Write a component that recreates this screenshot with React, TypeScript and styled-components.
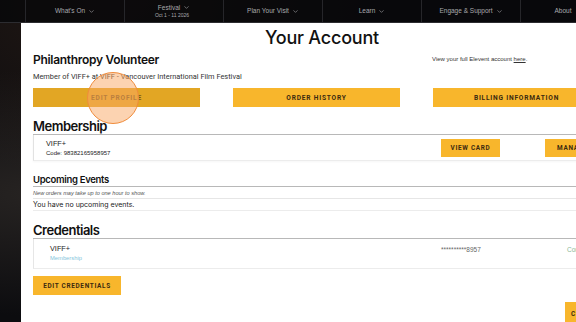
import React from "react";
import styled, { createGlobalStyle } from "styled-components";
import { ChevronDown } from "lucide-react";

const GlobalStyle = createGlobalStyle`
  html, body {
    margin: 0;
    padding: 0;
    width: 576px;
    height: 322px;
    overflow: hidden;
    background: #0c0c0f;
    font-family: "Liberation Sans", Arial, sans-serif;
  }
`;

const navItems = [
  { label: "What's On", chevron: true },
  { label: "Festival", chevron: true, sub: "Oct 1 - 11 2026" },
  { label: "Plan Your Visit", chevron: true },
  { label: "Learn", chevron: true },
  { label: "Engage & Support", chevron: true },
  { label: "About", chevron: false, narrow: true },
];

const App = () => {
  return (
    <>
      <GlobalStyle />
      <Page>
        <Nav>
          {navItems.map((item) => (
            <NavItem key={item.label} narrow={item.narrow}>
              <NavLabel>
                {item.label}
                {item.chevron && <ChevronDown size={7} strokeWidth={2} />}
              </NavLabel>
              {item.sub && <NavSub>{item.sub}</NavSub>}
            </NavItem>
          ))}
        </Nav>

        <Modal>
          <Title>Your Account</Title>

          <Columns>
            <div>
              <Name>Philanthropy Volunteer</Name>
              <MemberLine>Member of VIFF+ at VIFF - Vancouver International Film Festival</MemberLine>
            </div>
            <AccountLink>
              View your full Elevent account <u>here</u>.
            </AccountLink>
          </Columns>

          <ButtonGrid>
            <Button hovered>Edit Profile</Button>
            <Button>Order History</Button>
            <Button>Billing Information</Button>
          </ButtonGrid>

          <SectionTitle>Membership</SectionTitle>
          <MembershipCard>
            <div>
              <CardName>VIFF+</CardName>
              <CardCode>Code: 98382165958957</CardCode>
            </div>
            <SmallButton>View Card</SmallButton>
            <SmallButton>Manage</SmallButton>
          </MembershipCard>

          <SubTitle>Upcoming Events</SubTitle>
          <Note>New orders may take up to one hour to show.</Note>
          <EmptyRow>You have no upcoming events.</EmptyRow>

          <SectionTitle>Credentials</SectionTitle>
          <CredentialCard>
            <div>
              <CredName>VIFF+</CredName>
              <CredType>Membership</CredType>
            </div>
            <Masked>**********8957</Masked>
            <Status>Confirmed</Status>
          </CredentialCard>

          <CredButton>Edit Credentials</CredButton>

          <Footer>
            <CloseButton>Close</CloseButton>
          </Footer>

          <Cursor />
        </Modal>
      </Page>
    </>
  );
};

const Page = styled.div`
  position: relative;
  width: 576px;
  height: 322px;
  overflow: hidden;
  background:
    radial-gradient(ellipse at 8% 60%, rgba(90, 80, 70, 0.35), transparent 45%),
    radial-gradient(ellipse at 20% 0%, rgba(80, 50, 30, 0.35), transparent 40%),
    #0c0c0f;
`;

const Nav = styled.nav`
  display: flex;
  height: 22px;
  padding-left: 25px;
  border-bottom: 1px solid #2c2c30;
  background: rgba(8, 8, 10, 0.85);
`;

const NavItem = styled.div<{ narrow?: boolean }>`
  flex: 0 0 ${(props) => (props.narrow ? "84px" : "98px")};
  display: flex;
  flex-direction: column;
  align-items: center;
  justify-content: center;
  border-left: 1px solid #26262a;
  color: #a9a9ad;
`;

const NavLabel = styled.div`
  display: flex;
  align-items: center;
  gap: 3px;
  font-size: 6.5px;
  line-height: 8px;
`;

const NavSub = styled.div`
  font-size: 5px;
  line-height: 7px;
  margin-right: 4px;
`;

const Modal = styled.section`
  position: absolute;
  top: 23px;
  left: 21px;
  width: 600px;
  height: 320px;
  box-sizing: border-box;
  padding: 4px 12px 0;
  background: #ffffff;
  color: #111;
`;

const Title = styled.h1`
  margin: 0;
  text-align: center;
  font-family: Inter, "Liberation Sans", sans-serif;
  font-weight: 500;
  font-size: 18px;
  line-height: 22px;
  letter-spacing: -0.2px;
  padding-left: 2px;
`;

const Columns = styled.div`
  display: grid;
  grid-template-columns: 367px 167px;
  column-gap: 32px;
  margin-top: 3px;
`;

const Name = styled.div`
  font-family: Inter, "Liberation Sans", sans-serif;
  font-weight: 600;
  font-size: 12px;
  line-height: 16px;
  letter-spacing: -0.3px;
`;

const MemberLine = styled.div`
  margin-top: 4px;
  font-family: Roboto, "Liberation Sans", sans-serif;
  font-size: 7.4px;
  line-height: 10px;
  color: #333;
`;

const AccountLink = styled.div`
  padding-top: 3px;
  font-size: 6px;
  line-height: 8px;
  color: #333;
`;

const ButtonGrid = styled.div`
  display: grid;
  grid-template-columns: repeat(3, 167px);
  column-gap: 33px;
  margin-top: 6px;
`;

const Button = styled.div<{ hovered?: boolean }>`
  height: 19px;
  display: flex;
  align-items: center;
  justify-content: center;
  background: ${(props) => (props.hovered ? "#e2a624" : "#f8b62c")};
  color: ${(props) => (props.hovered ? "#7a561a" : "#3b2a10")};
  font-family: Roboto, "Liberation Sans", sans-serif;
  font-weight: 700;
  font-size: 6.6px;
  letter-spacing: 0.8px;
  text-transform: uppercase;
`;

const SectionTitle = styled.h2`
  margin: 11px 0 0;
  font-family: Inter, "Liberation Sans", sans-serif;
  font-weight: 600;
  font-size: 13px;
  line-height: 16px;
  letter-spacing: -0.5px;
  border-bottom: 1px solid #b8b8b8;
`;

const MembershipCard = styled.div`
  display: grid;
  grid-template-columns: 1fr 59px 55px;
  column-gap: 45px;
  align-items: center;
  height: 25px;
  padding-left: 12px;
  margin-right: 9px;
  border-left: 1px solid #e2e2e2;
  border-bottom: 1px solid #ececec;
  box-shadow: 0 1px 2px rgba(0, 0, 0, 0.04);
`;

const CardName = styled.div`
  font-size: 7.3px;
  line-height: 11px;
  color: #222;
`;

const CardCode = styled.div`
  font-size: 6px;
  line-height: 9px;
  color: #222;
`;

const SmallButton = styled.div`
  height: 18px;
  display: flex;
  align-items: center;
  justify-content: center;
  background: #f8b62c;
  color: #3b2a10;
  font-family: Roboto, "Liberation Sans", sans-serif;
  font-weight: 700;
  font-size: 6.4px;
  letter-spacing: 0.7px;
  text-transform: uppercase;
  overflow: hidden;
  white-space: nowrap;
`;

const SubTitle = styled.h3`
  margin: 13px 0 0;
  font-family: Inter, "Liberation Sans", sans-serif;
  font-weight: 600;
  font-size: 9.5px;
  line-height: 12px;
  letter-spacing: -0.3px;
  border-bottom: 1px solid #b8b8b8;
`;

const Note = styled.div`
  height: 11px;
  display: flex;
  align-items: center;
  font-style: italic;
  font-size: 5.6px;
  color: #555;
  border-bottom: 1px solid #e6e6e6;
`;

const EmptyRow = styled.div`
  height: 11px;
  display: flex;
  align-items: center;
  font-family: Inter, "Liberation Sans", sans-serif;
  font-size: 7px;
  color: #222;
  border-bottom: 1px solid #ececec;
`;

const CredentialCard = styled.div`
  display: grid;
  grid-template-columns: 391px 126px 1fr;
  align-items: center;
  height: 29px;
  padding-left: 16px;
  border-left: 1px solid #e6e6e6;
  border-bottom: 1px solid #ececec;
`;

const CredName = styled.div`
  font-size: 7.3px;
  line-height: 10px;
  color: #222;
`;

const CredType = styled.div`
  font-size: 5.8px;
  line-height: 9px;
  color: #86c6dc;
`;

const Masked = styled.div`
  font-size: 6.5px;
  color: #666;
  align-self: start;
  padding-top: 7px;
`;

const Status = styled.div`
  font-size: 6.5px;
  color: #8ab898;
  align-self: start;
  padding-top: 7px;
  white-space: nowrap;
`;

const CredButton = styled(SmallButton)`
  width: 88px;
  height: 19px;
  margin-top: 7px;
`;

const Footer = styled.div`
  display: flex;
  margin-top: 7px;
  padding-left: 532px;
`;

const CloseButton = styled(SmallButton)`
  width: 50px;
  height: 24px;
  justify-content: flex-start;
  padding-left: 6px;
`;

const Cursor = styled.div`
  position: absolute;
  left: 66px;
  top: 49px;
  width: 50px;
  height: 50px;
  border-radius: 50%;
  background: rgba(250, 168, 100, 0.5);
  border: 1.5px solid #f08c3c;
`;

export default App;
